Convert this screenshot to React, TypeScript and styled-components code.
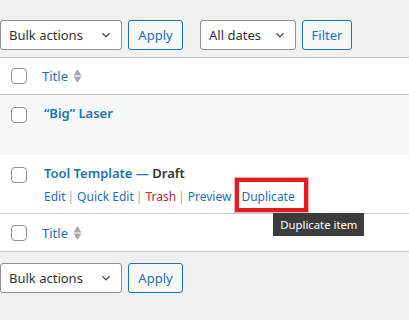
import React from 'react';
import styled, { createGlobalStyle } from 'styled-components';

const GlobalStyle = createGlobalStyle`
  body {
    margin: 0;
    background: #f0f0f1;
    font-family: "Noto Sans", "Open Sans", sans-serif;
    color: #3c434a;
  }
`;

const Page = styled.div`
  width: 409px;
  height: 320px;
  overflow: hidden;
`;

const Toolbar = styled.div<{ $top: number; $bottom: number }>`
  display: flex;
  align-items: center;
  padding-top: ${props => props.$top}px;
  padding-bottom: ${props => props.$bottom}px;
`;

const ActionGroup = styled.div`
  display: flex;
  align-items: center;
  gap: 6px;
  margin-right: 17px;
`;

const Select = styled.div<{ $width: number }>`
  box-sizing: border-box;
  width: ${props => props.$width}px;
  height: 30px;
  border: 1px solid #8c8f94;
  border-radius: 3px;
  background: #fff;
  display: flex;
  align-items: center;
  justify-content: space-between;
  padding: 0 9px 0 8px;
  font-size: 13px;
  color: #2c3338;
`;

const Button = styled.div<{ $width: number }>`
  box-sizing: border-box;
  width: ${props => props.$width}px;
  height: 30px;
  border: 1px solid #2271b1;
  border-radius: 3px;
  background: #f6f7f7;
  color: #2271b1;
  font-size: 13px;
  display: flex;
  align-items: center;
  justify-content: center;
`;

const Table = styled.div`
  background: #fff;
  border-top: 1px solid #c3c4c7;
  border-bottom: 1px solid #c3c4c7;
`;

const Row = styled.div<{ $striped?: boolean; $height: number; $line?: boolean }>`
  display: grid;
  grid-template-columns: 44px 1fr;
  box-sizing: border-box;
  height: ${props => props.$height}px;
  background: ${props => (props.$striped ? '#f6f7f7' : '#fff')};
  border-bottom: ${props => (props.$line ? '1px solid #c3c4c7' : 'none')};
`;

const HeadRow = styled(Row)`
  align-items: center;
`;

const CheckCell = styled.div<{ $top?: number }>`
  padding-left: 11px;
  padding-top: ${props => props.$top ?? 0}px;
`;

const Checkbox = styled.div`
  box-sizing: border-box;
  width: 16px;
  height: 16px;
  border: 1px solid #8c8f94;
  border-radius: 4px;
  background: #fff;
`;

const HeadTitle = styled.div`
  display: flex;
  align-items: center;
  gap: 5px;
  margin-left: -2px;
  font-size: 13px;
  color: #2271b1;
`;

const TitleCell = styled.div`
  padding-top: 8px;
`;

const RowTitle = styled.div`
  font-size: 13px;
  font-weight: 600;
  line-height: 20px;
  color: #2271b1;
`;

const State = styled.span`
  color: #2c3338;
`;

const RowActions = styled.div<{ $hidden?: boolean }>`
  visibility: ${props => (props.$hidden ? 'hidden' : 'visible')};
  margin-top: 4px;
  font-size: 12px;
  line-height: 20px;
  display: flex;
  align-items: center;
  color: #a7aaad;
`;

const ActionLink = styled.span<{ $danger?: boolean }>`
  color: ${props => (props.$danger ? '#b32d2e' : '#2271b1')};
`;

const Sep = styled.span`
  margin: 0 3px 0 2px;
`;

const Highlight = styled.span`
  position: relative;
  margin-left: 10px;
`;

const RedBox = styled.span`
  position: absolute;
  left: -6px;
  top: -9px;
  width: 73px;
  height: 34px;
  box-sizing: border-box;
  border: 4px solid #e41c22;
  box-shadow: 0 0 0 1px rgba(228, 28, 34, 0.35);
`;

const Tip = styled.span`
  position: absolute;
  left: 32px;
  top: 26px;
  width: 91px;
  height: 23px;
  background: #3c3c3c;
  color: #fff;
  font-size: 11.3px;
  line-height: 23px;
  text-align: center;
  white-space: nowrap;
`;

const Chevron = () => (
  <svg width="12" height="12" viewBox="0 0 20 20">
    <path d="M4 7l6 6 6-6" fill="none" stroke="#50575e" strokeWidth="2.2" />
  </svg>
);

const SortIcon = () => (
  <svg width="9" height="16" viewBox="0 0 9 16">
    <path d="M4.5 1l4 6.5H0.5z" fill="#a7aaad" />
    <path d="M4.5 15l4-6.5H0.5z" fill="#a7aaad" />
  </svg>
);

const BulkBar = ({ top, bottom, filters }: { top: number; bottom: number; filters?: boolean }) => (
  <Toolbar $top={top} $bottom={bottom}>
    <ActionGroup>
      <Select $width={122}>
        Bulk actions
        <Chevron />
      </Select>
      <Button $width={55}>Apply</Button>
    </ActionGroup>
    {filters && (
      <ActionGroup>
        <Select $width={96}>
          All dates
          <Chevron />
        </Select>
        <Button $width={50}>Filter</Button>
      </ActionGroup>
    )}
  </Toolbar>
);

export default function App() {
  return (
    <Page>
      <GlobalStyle />
      <BulkBar top={20} bottom={7} filters />
      <Table>
        <HeadRow $height={37} $line>
          <CheckCell>
            <Checkbox />
          </CheckCell>
          <HeadTitle>
            Title
            <SortIcon />
          </HeadTitle>
        </HeadRow>
        <Row $striped $height={60}>
          <CheckCell $top={12}>
            <Checkbox />
          </CheckCell>
          <TitleCell>
            <RowTitle>“Big” Laser</RowTitle>
            <RowActions $hidden>Edit</RowActions>
          </TitleCell>
        </Row>
        <Row $height={59} $line>
          <CheckCell $top={12}>
            <Checkbox />
          </CheckCell>
          <TitleCell>
            <RowTitle>
              Tool Template — <State>Draft</State>
            </RowTitle>
            <RowActions>
              <ActionLink>Edit</ActionLink>
              <Sep>|</Sep>
              <ActionLink>Quick Edit</ActionLink>
              <Sep>|</Sep>
              <ActionLink $danger>Trash</ActionLink>
              <Sep>|</Sep>
              <ActionLink>Preview</ActionLink>
              <Highlight>
                <ActionLink>Duplicate</ActionLink>
                <RedBox />
                <Tip>Duplicate item</Tip>
              </Highlight>
            </RowActions>
          </TitleCell>
        </Row>
        <HeadRow $height={37}>
          <CheckCell>
            <Checkbox />
          </CheckCell>
          <HeadTitle>
            Title
            <SortIcon />
          </HeadTitle>
        </HeadRow>
      </Table>
      <BulkBar top={11} bottom={0} />
    </Page>
  );
}
